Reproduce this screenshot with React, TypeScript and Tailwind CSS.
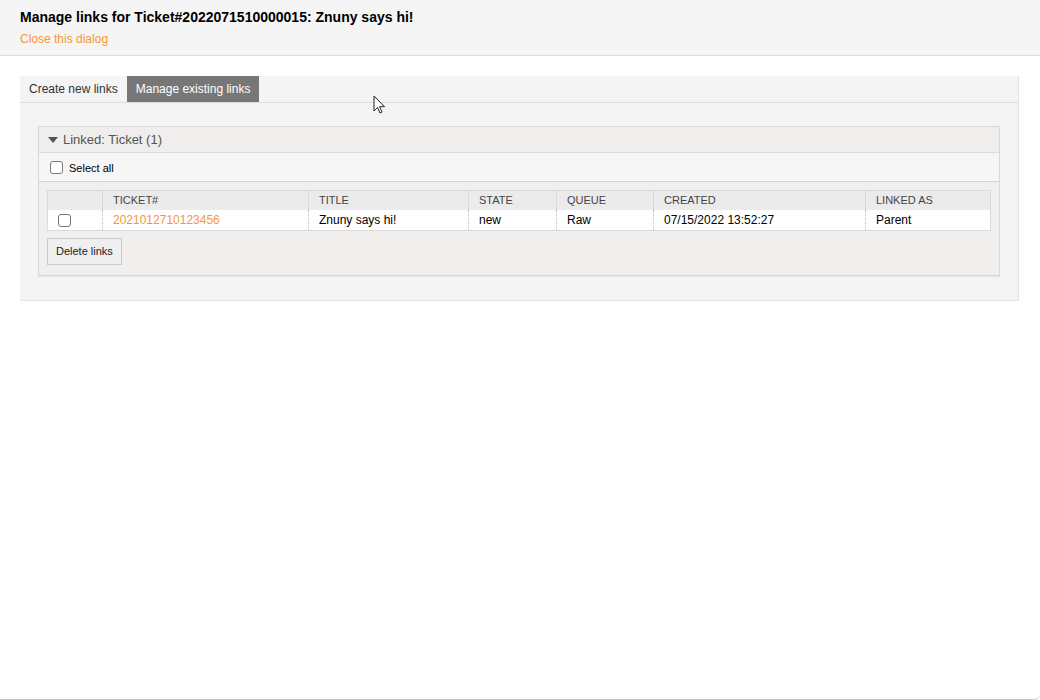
import { useState } from 'react'

const COLS = ['', 'Ticket#', 'Title', 'State', 'Queue', 'Created', 'Linked as']
const WIDTHS = ['w-[55px]', 'w-[206px]', 'w-[160px]', 'w-[88px]', 'w-[97px]', 'w-[212px]', '']

const ROWS = [
  { ticket: '2021012710123456', title: 'Znuny says hi!', state: 'new', queue: 'Raw', created: '07/15/2022 13:52:27', linkedAs: 'Parent' },
]

function Checkbox({ checked, onChange }: { checked: boolean; onChange: () => void }) {
  return (
    <span
      onClick={onChange}
      className="inline-block w-[13px] h-[13px] rounded-[3px] border border-[#767676] bg-white cursor-pointer align-middle"
    >
      {checked && (
        <svg viewBox="0 0 13 13" className="w-full h-full">
          <path d="M2.5 6.5l2.5 2.5 5-5" fill="none" stroke="#333" strokeWidth="1.6" />
        </svg>
      )}
    </span>
  )
}

function Cursor() {
  return (
    <svg width="14" height="20" viewBox="0 0 14 20" className="absolute left-[373px] top-[95px] pointer-events-none">
      <path d="M1 1v15l3.5-3.5 2.5 5.5 2-1-2.5-5.3H11.5z" fill="#fff" stroke="#222" strokeWidth="1" strokeLinejoin="round" />
    </svg>
  )
}

export default function App() {
  const [tab, setTab] = useState<'create' | 'manage'>('manage')
  const [selected, setSelected] = useState<boolean[]>(ROWS.map(() => false))
  const allSelected = selected.every(Boolean)

  return (
    <div className="relative h-[700px] bg-white font-['Liberation_Sans',Arial,sans-serif] text-[12px] text-black border-b border-[#c8c8c8] rounded-br-[6px] overflow-hidden">
      {/* dialog header */}
      <div className="bg-[#f5f5f5] border-b border-[#dcdcdc] px-5 pt-[9px] h-[56px]">
        <h1 className="font-bold text-[14px] leading-[17px]">Manage links for Ticket#2022071510000015: Znuny says hi!</h1>
        <a className="block mt-[6px] text-[12px] leading-[14px] text-[#f7963a] cursor-pointer">Close this dialog</a>
      </div>

      <div className="pl-5 pr-[21px] pt-5">
        <div className="bg-[#f4f4f4] border-r border-b border-[#e4e4e4]">
          {/* tabs */}
          <div className="flex h-[27px] border-b border-[#dcdcdc]">
            <button
              onClick={() => setTab('create')}
              className={`px-[9px] text-[12px] leading-[26px] ${tab === 'create' ? 'bg-[#777] text-white' : 'text-[#333]'}`}
            >
              Create new links
            </button>
            <button
              onClick={() => setTab('manage')}
              className={`px-[9px] text-[12px] leading-[26px] ${tab === 'manage' ? 'bg-[#777] text-white' : 'text-[#333]'}`}
            >
              Manage existing links
            </button>
          </div>

          <div className="pl-[18px] pr-[18px] pt-[23px] pb-[24px]">
            <div className="border border-[#d8d8d8] shadow-[0_1px_1px_rgba(0,0,0,0.06)]">
              <div className="flex items-center gap-[5px] h-[26px] bg-[#efeeec] border-b border-[#dcdcdc] px-[9px] text-[13px] text-[#555]">
                <svg width="10" height="6" viewBox="0 0 10 6"><path d="M0 0h10L5 6z" fill="#555" /></svg>
                Linked: Ticket (1)
              </div>
              <div className="flex items-center gap-[6px] h-[29px] bg-[#f6f6f6] border-b border-[#d4d4d4] px-[11px] text-[11px]">
                <Checkbox checked={allSelected} onChange={() => setSelected(selected.map(() => !allSelected))} />
                <span className="mt-[2px]">Select all</span>
              </div>
              <div className="bg-[#f0efed] px-[8px] pt-[8px] pb-[10px]">
                <table className="w-full border-collapse border border-[#dadada] text-[12px]">
                  <thead>
                    <tr className="bg-[#ebebeb] h-[19px]">
                      {COLS.map((c, i) => (
                        <th key={i} className={`${WIDTHS[i]} text-left font-normal uppercase text-[11px] text-[#444] px-[10px] border-l border-[#d8d8d8] first:border-l-0`}>
                          {c}
                        </th>
                      ))}
                    </tr>
                  </thead>
                  <tbody>
                    {ROWS.map((r, idx) => (
                      <tr key={r.ticket} className="bg-white h-[21px]">
                        <td className="px-[10px]">
                          <Checkbox checked={selected[idx]} onChange={() => setSelected(selected.map((s, j) => (j === idx ? !s : s)))} />
                        </td>
                        <td className="px-[10px] border-l border-dotted border-[#bbb] text-[#f7963a]">{r.ticket}</td>
                        <td className="px-[10px] border-l border-dotted border-[#bbb]">{r.title}</td>
                        <td className="px-[10px] border-l border-dotted border-[#bbb]">{r.state}</td>
                        <td className="px-[10px] border-l border-dotted border-[#bbb]">{r.queue}</td>
                        <td className="px-[10px] border-l border-dotted border-[#bbb]">{r.created}</td>
                        <td className="px-[10px] border-l border-dotted border-[#bbb]">{r.linkedAs}</td>
                      </tr>
                    ))}
                  </tbody>
                </table>
                <button className="mt-[7px] h-[27px] px-[8px] bg-[#efefef] border border-[#c9c9c9] text-[11px] text-[#222]">
                  Delete links
                </button>
              </div>
            </div>
          </div>
        </div>
      </div>
      <Cursor />
    </div>
  )
}
